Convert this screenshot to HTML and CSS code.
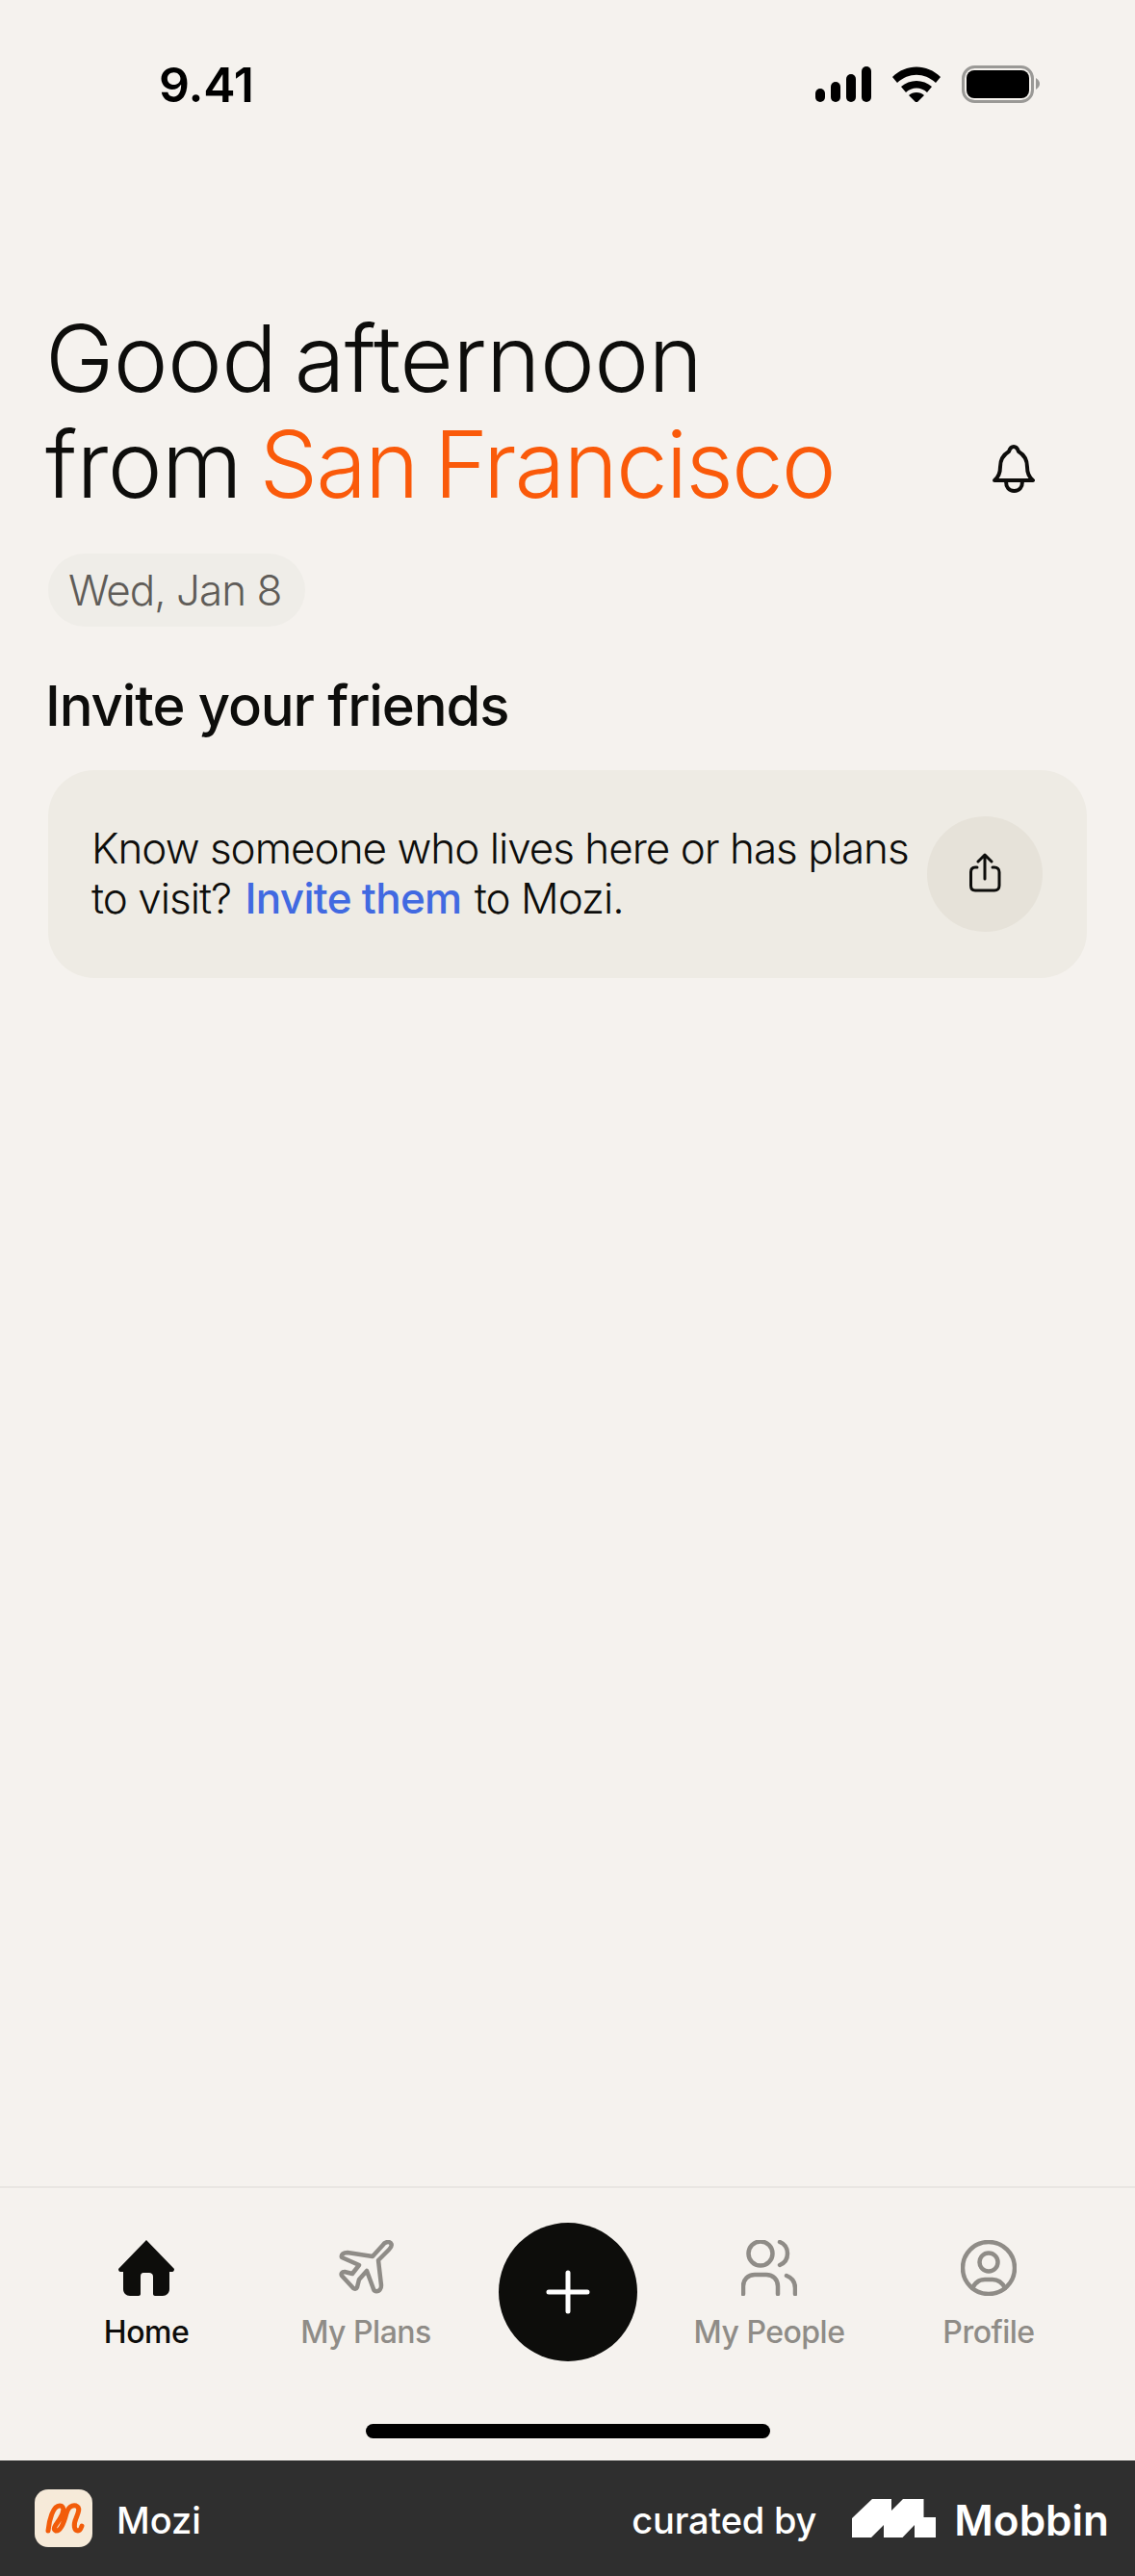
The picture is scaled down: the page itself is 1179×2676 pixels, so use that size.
FILE: index.html
```html
<!DOCTYPE html>
<html lang="en">
<head>
    <meta charset="UTF-8">
    <meta name="viewport" content="width=device-width, initial-scale=1.0">
    <title>Mozi Home</title>

    <link rel="stylesheet" href="styles.css">
</head>
<body>
    <div class="app">
        <div class="status-bar">
            <span class="time">9.41</span>
            <div class="status-icons">
                <svg width="58" height="37" viewBox="0 0 58 37">
                    <rect x="0" y="23" width="10" height="14" rx="5"/>
                    <rect x="16" y="16" width="10" height="21" rx="5"/>
                    <rect x="32" y="8" width="10" height="29" rx="5"/>
                    <rect x="48" y="0" width="10" height="37" rx="5"/>
                </svg>
                <svg width="50" height="37" viewBox="0 0 50 37">
                    <path d="M0 11C14-3 36-3 50 11L45 17C33 6 17 6 5 17Z"/>
                    <path d="M9 21C18 13 32 13 41 21L36 27C30 21 20 21 14 27Z"/>
                    <path d="M17 30C21 26 29 26 33 30L25 38Z"/>
                </svg>
                <svg width="82" height="39" viewBox="0 0 82 39">
                    <rect x="1.5" y="1.5" width="72" height="36" rx="12" fill="none" stroke="#9a9996" stroke-width="3"/>
                    <rect x="5" y="5" width="65" height="29" rx="8"/>
                    <path d="M77 13C80 15 81 17 81 19C81 21 80 23 77 25Z" fill="#9a9996"/>
                </svg>
            </div>
        </div>

        <main class="content">
            <div class="greeting">
                <h1>Good afternoon<br>from <span class="city">San Francisco</span></h1>
                <svg class="bell" width="44" height="50" viewBox="0 0 44 50" fill="none" stroke="#0d0d0b" stroke-width="4" stroke-linejoin="round" stroke-linecap="round">
                    <path d="M2 37C7 33 8 29 8 23C8 14 12 10 17 7C18 4 20 2 22 2C24 2 26 4 27 7C32 10 36 14 36 23C36 29 37 33 42 37Z"/>
                    <path d="M14 38C14 44 17 48 22.500 48C28 48 31 44 31 38"/>
                </svg>
            </div>

            <div class="date-pill">Wed, Jan 8</div>

            <h2>Invite your friends</h2>

            <div class="invite-card">
                <p>Know someone who lives here or has plans<br>to visit? <a href="#">Invite them</a> to Mozi.</p>
                <button class="share-btn">
                    <svg width="56" height="60" viewBox="0 0 56 60" fill="none" stroke="#0d0d0b" stroke-width="3" stroke-linecap="round" stroke-linejoin="round">
                        <path d="M20 23H18C15 23 13.500 25 13.500 28V42C13.500 45 15 47 18 47H38C41 47 43 45 43 42V28C43 25 41 23 38 23H36"/>
                        <path d="M28 35V10M21 17L28 10L35 17"/>
                    </svg>
                </button>
            </div>
        </main>

        <nav class="tab-bar">
            <div class="tabs">
                <a class="tab active" href="#">
                    <svg width="58" height="58" viewBox="0 0 58 58">
                        <path fill="#0d0d0b" fill-rule="evenodd" d="M29 0L58 30C58 32 57 33 56 33H53V51C53 55 50 58 46 58H38C37 58 36 57 36 56V38C36 35 34 34 32 34H26C24 34 23 35 23 38V56C23 57 22 58 21 58H12C8 58 5 55 5 51V33H2C1 33 0 32 0 30Z"/>
                    </svg>
                    <span>Home</span>
                </a>
                <a class="tab" href="#">
                    <svg class="line-icon" width="58" height="58" viewBox="7 7 58 58">
                        <path d="M43 24L17 20C13 20 10 22 11 25L29 33L22 42L14 40C11 40 10 42 11 44L23 57C25 58 26 58 27 56L29 48L37 39L44 58C45 61 49 61 51 58C52 57 52 56 52 54L49 28L60 17C65 12 62 9 59 9C57 9 55 10 53 13Z"/>
                    </svg>
                    <span>My Plans</span>
                </a>
                <button class="add-btn">
                    <svg width="46" height="46" viewBox="0 0 46 46" fill="none" stroke="#fff" stroke-width="5" stroke-linecap="round">
                        <path d="M23 3V43M3 23H43"/>
                    </svg>
                </button>
                <a class="tab" href="#">
                    <svg class="line-icon" width="58" height="58" viewBox="0 0 58 58">
                        <circle cx="20" cy="14" r="12.500"/>
                        <path d="M40 2C45 4 48 8 48 14C48 20 45 24 40 26"/>
                        <path d="M2 56V48C2 41 7 36 14 36H26C33 36 38 41 38 48V56"/>
                        <path d="M47 37C52 39 56 43 56 50V56"/>
                    </svg>
                    <span>My People</span>
                </a>
                <a class="tab" href="#">
                    <svg class="line-icon" width="58" height="58" viewBox="0 0 58 58">
                        <circle cx="29" cy="29" r="27"/>
                        <circle cx="29" cy="23" r="9.500"/>
                        <path d="M12 50C15 44 19 41 25 41H33C39 41 43 44 46 50"/>
                    </svg>
                    <span>Profile</span>
                </a>
            </div>
            <div class="home-indicator"></div>
        </nav>

        <footer class="credit-bar">
            <div class="credit-app">
                <div class="app-logo">
                    <svg width="60" height="60" viewBox="6 6 60 60" fill="none" stroke="#f25c0a" stroke-width="5" stroke-linecap="round" stroke-linejoin="round">
                        <path d="M20 49C21 38 25 23 32 23C38 23 36 31 32 37C28 43 24 47 28 49C33 50 37 39 39 31C41 24 45 22 49 23C54 25 51 31 49 36C46 43 47 49 51 49C53 49 54 47 55 44"/>
                    </svg>
                </div>
                <span class="app-name">Mozi</span>
            </div>
            <div class="credit-by">
                <span class="curated">curated by</span>
                <svg class="mobbin-mark" width="87" height="40" viewBox="0 0 87 40">
                    <path fill="#fff" d="M0 20L21 0H41V12L53 0H74.500V19H87V40H65V27L52.500 40H33V27L20 40H0Z"/>
                </svg>
                <span class="mobbin">Mobbin</span>
            </div>
        </footer>
    </div>
</body>
</html>
```

FILE: styles.css
```css
* {
    box-sizing: border-box;
}

body {
    margin: 0;
    font-family: Inter, "Liberation Sans", sans-serif;
    background-color: #f5f2ee;
    color: #0d0d0b;
}

.app {
    display: flex;
    flex-direction: column;
    height: 2676px;
    overflow: hidden;
}

/* Status bar */
.status-bar {
    display: flex;
    justify-content: space-between;
    align-items: flex-start;
    height: 140px;
    padding: 68px 98px 0 165px;
}

.time {
    font-size: 50px;
    font-weight: 600;
    line-height: 40px;
    letter-spacing: -0.2px;
    color: #000;
}

.status-icons {
    display: flex;
    align-items: center;
    gap: 22px;
}

/* Main content */
.content {
    flex: 1;
    padding: 177px 50px 0;
}

.greeting {
    display: flex;
    justify-content: space-between;
    align-items: flex-end;
}

h1 {
    margin: 0 0 0 -3px;
    font-size: 96px;
    font-weight: 300;
    line-height: 110px;
    letter-spacing: -0.65px;
    word-spacing: -8px;
}

.city {
    color: #fa5a0a;
    letter-spacing: -1.9px;
}

.bell {
    margin: 0 54px 25px 0;
}

.date-pill {
    display: inline-block;
    height: 76px;
    margin-top: 38px;
    padding: 0 25px 0 21px;
    border-radius: 38px;
    background-color: #efede8;
    color: #5f5c58;
    font-size: 44px;
    font-weight: 300;
    line-height: 76px;
    letter-spacing: -1px;
}

h2 {
    margin: 47px 0 0 -3px;
    font-size: 58px;
    font-weight: 500;
    line-height: 70px;
    letter-spacing: -1.1px;
}

.invite-card {
    display: flex;
    justify-content: space-between;
    align-items: center;
    height: 216px;
    margin-top: 32px;
    padding: 0 46px 0 45px;
    border-radius: 48px;
    background-color: #eeebe4;
}

.invite-card p {
    margin: -3px 0 0;
    font-size: 44px;
    font-weight: 300;
    line-height: 52px;
    letter-spacing: -1px;
}

.invite-card a {
    margin: 0 2px 0 3px;
    color: #4169e1;
    font-weight: 500;
    letter-spacing: -0.7px;
    text-decoration: none;
}

.share-btn {
    display: flex;
    justify-content: center;
    align-items: center;
    width: 120px;
    height: 120px;
    padding: 0;
    border: none;
    border-radius: 50%;
    background-color: #e6e2d9;
}

/* Tab bar */
.tab-bar {
    height: 285px;
    padding-top: 36px;
    border-top: 2px solid #e9e6e2;
}

.tabs {
    display: grid;
    grid-template-columns: 228px 228px 1fr 228px 228px;
    align-items: start;
    padding: 0 38px;
}

.tab {
    display: flex;
    flex-direction: column;
    align-items: center;
    gap: 18px;
    padding-top: 18px;
    color: #8f8c87;
    font-size: 32px;
    font-weight: 500;
    line-height: 40px;
    letter-spacing: -0.5px;
    text-decoration: none;
}

.tab.active {
    color: #0d0d0b;
}

.line-icon {
    fill: none;
    stroke: #8f8c87;
    stroke-width: 4.5;
    stroke-linecap: round;
    stroke-linejoin: round;
}

.add-btn {
    display: flex;
    justify-content: center;
    align-items: center;
    justify-self: center;
    width: 144px;
    height: 144px;
    padding: 0;
    border: none;
    border-radius: 50%;
    background-color: #0d0d0b;
}

.home-indicator {
    width: 420px;
    height: 15px;
    margin: 65px auto 0;
    border-radius: 8px;
    background-color: #000;
}

/* Credit footer */
.credit-bar {
    display: flex;
    justify-content: space-between;
    align-items: center;
    height: 120px;
    padding: 0 27px 0 36px;
    background-color: #2f2f2f;
    color: #fff;
}

.credit-app,
.credit-by {
    display: flex;
    align-items: center;
}

.app-logo {
    width: 60px;
    height: 60px;
    border-radius: 14px;
    background-color: #f6ead9;
}

.app-logo svg {
    display: block;
}

.app-name {
    margin: 3px 0 0 25px;
    font-size: 38px;
    font-weight: 500;
}

.curated {
    margin-top: 3px;
    font-size: 38px;
    font-weight: 500;
    letter-spacing: -0.2px;
}

.mobbin-mark {
    margin-left: 37px;
}

.mobbin {
    margin: 3px 0 0 19px;
    font-size: 44px;
    font-weight: 600;
    letter-spacing: 0;
}
```
